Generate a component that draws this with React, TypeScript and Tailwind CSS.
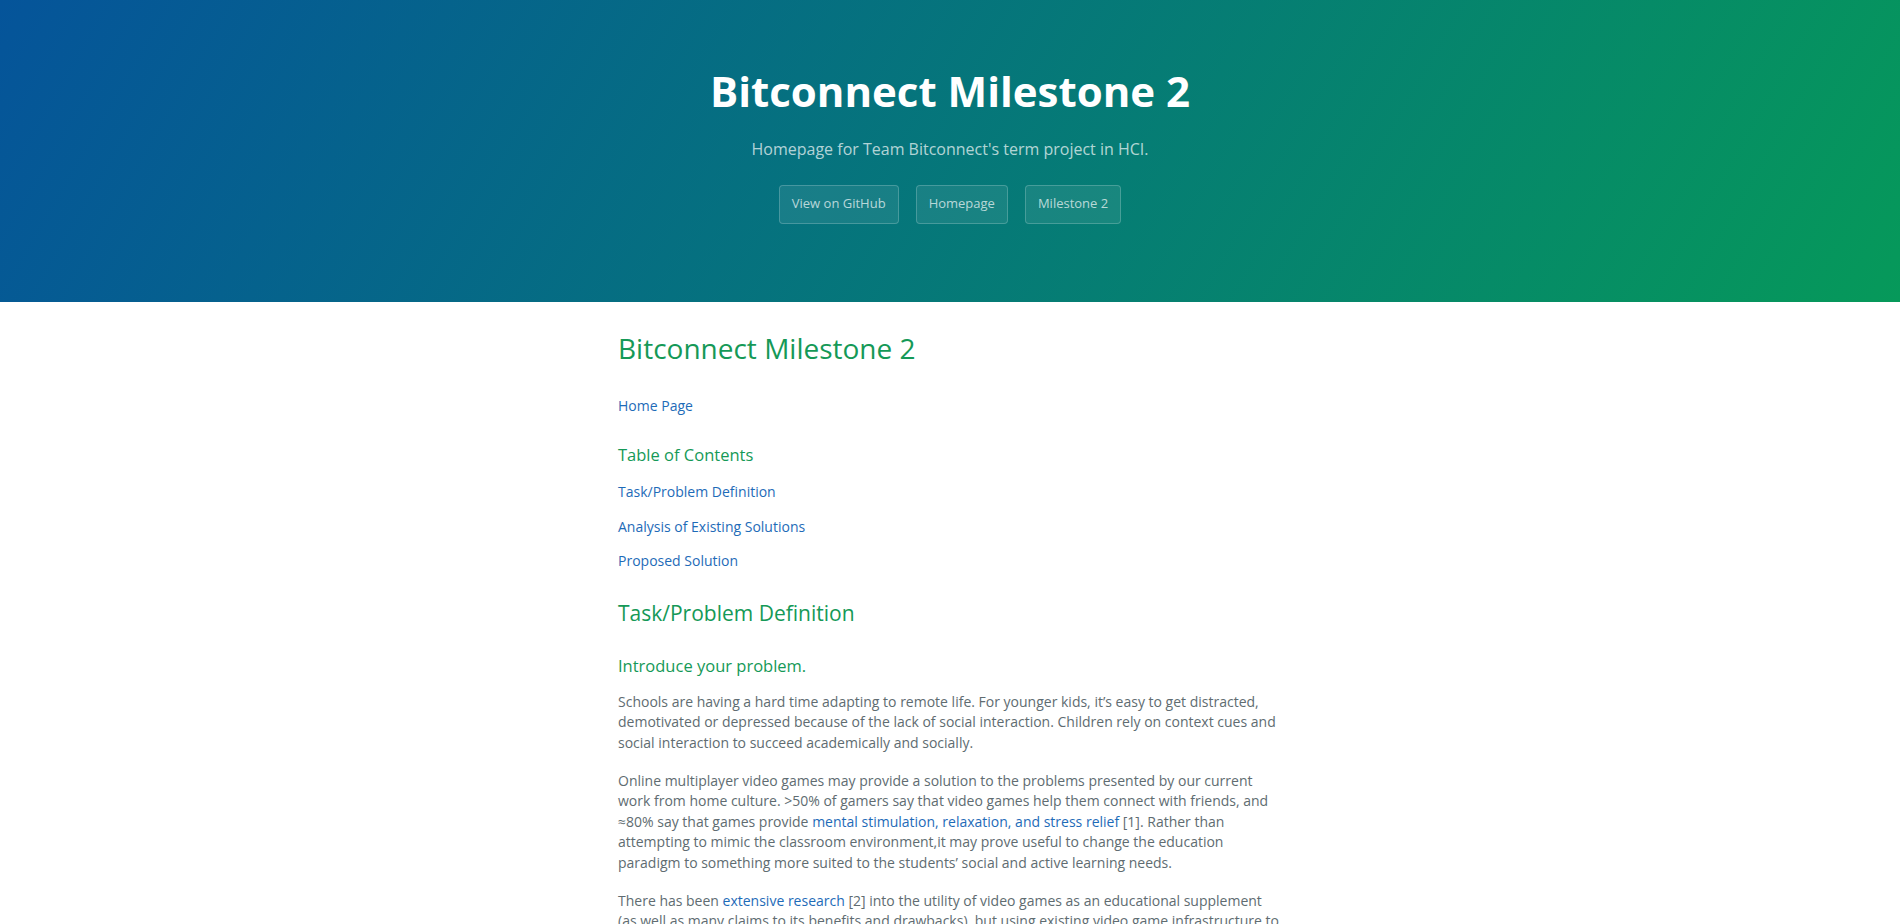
const links = ["View on GitHub", "Homepage", "Milestone 2"];

const toc = ["Task/Problem Definition", "Analysis of Existing Solutions", "Proposed Solution"];

const A = ({ children }: { children: React.ReactNode }) => (
    <a href="#" className="text-[#1e6bb8] no-underline hover:underline">{children}</a>
);

const App = () => {
    return (
        <div className="min-h-screen bg-white font-['Open_Sans',sans-serif] text-[#606c71]">
            <header className="h-[302px] flex flex-col items-center pt-[64px] bg-[linear-gradient(120deg,#05549a,#06995a)] text-white">
                <h1 className="text-[42px] font-bold leading-[1.3] text-white">Bitconnect Milestone 2</h1>
                <h2 className="mt-[18px] text-[16px] leading-[1.5] text-white/70">Homepage for Team Bitconnect's term project in HCI.</h2>
                <div className="mt-[24px] flex gap-[17px]">
                    {links.map((l) => (
                        <a key={l} href="#"
                           className="px-[12px] h-[39px] flex items-center text-[13px] text-white/70 bg-white/[0.08] border border-white/20 rounded-[4px]">
                            {l}
                        </a>
                    ))}
                </div>
            </header>
            <main className="w-full max-w-[818px] mx-auto px-[77px] pt-[29px] text-[14px] leading-[20.6px]">
                <h1 className="text-[28px] leading-[1.25] text-[#159957] mb-[30px]">Bitconnect Milestone 2</h1>
                <p className="mb-[28px]"><A>Home Page</A></p>
                <h3 className="text-[16.5px] leading-[1.25] text-[#159957] mb-[17px]">Table of Contents</h3>
                {toc.map((t) => (
                    <p key={t} className="mb-[14px]"><A>{t}</A></p>
                ))}
                <h2 className="text-[21px] leading-[1.25] text-[#159957] mt-[28px] mb-[30px]">Task/Problem Definition</h2>
                <h3 className="text-[16.5px] leading-[1.25] text-[#159957] mb-[15px]">Introduce your problem.</h3>
                <p className="mb-[17px]">
                    Schools are having a hard time adapting to remote life. For younger kids, it’s easy to get distracted,
                    demotivated or depressed because of the lack of social interaction. Children rely on context cues and
                    social interaction to succeed academically and socially.
                </p>
                <p className="mb-[17px]">
                    Online multiplayer video games may provide a solution to the problems presented by our current
                    work from home culture. &gt;50% of gamers say that video games help them connect with friends, and
                    ≈80% say that games provide <A>mental stimulation, relaxation, and stress relief</A> [1]. Rather than
                    attempting to mimic the classroom environment,it may prove useful to change the education
                    paradigm to something more suited to the students’ social and active learning needs.
                </p>
                <p className="mb-[17px]">
                    There has been <A>extensive research</A> [2] into the utility of video games as an educational supplement
                    (as well as many claims to its benefits and drawbacks), but using existing video game infrastructure to
                    facilitate remote learning has not been explored as thoroughly.
                </p>
            </main>
        </div>
    );
};

export default App;
